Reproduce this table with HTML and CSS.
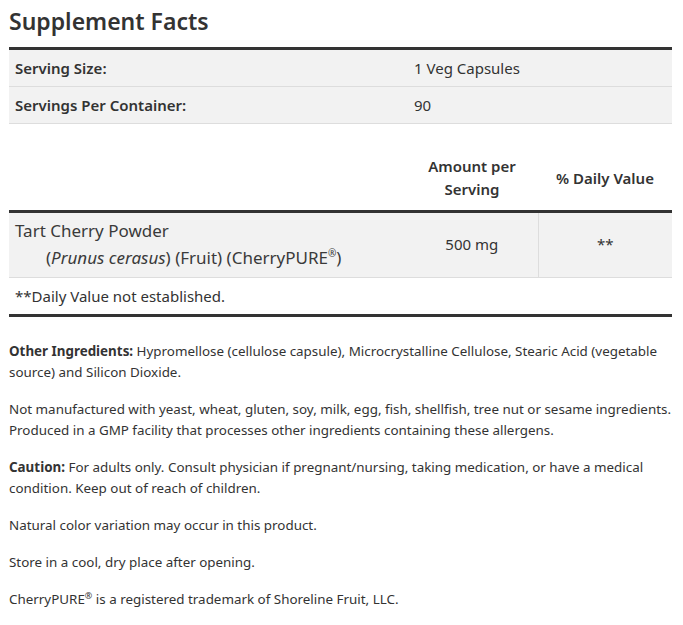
FILE: index.html
```html
<!DOCTYPE html>
<html>
<head>
<meta charset="utf-8">
<link rel="stylesheet" href="styles.css">
</head>
<body>
<div class="page">
  <h2 class="title">Supplement Facts</h2>
  <table class="facts serving">
    <tr><th class="c1">Serving Size:</th><td class="c2">1 Veg Capsules</td></tr>
    <tr><th class="c1">Servings Per Container:</th><td class="c2">90</td></tr>
  </table>
  <table class="facts nutr">
    <thead>
      <tr><th class="n1"></th><th class="n2">Amount per<br>Serving</th><th class="n3">% Daily Value</th></tr>
    </thead>
    <tbody>
      <tr class="shaded">
        <td class="n1">Tart Cherry Powder<div class="sub">(<i>Prunus cerasus</i>) (Fruit) (CherryPURE<sup>®</sup>)</div></td>
        <td class="n2 amt">500 mg</td>
        <td class="n3 dv">**</td>
      </tr>
      <tr class="foot"><td colspan="3">**Daily Value not established.</td></tr>
    </tbody>
  </table>
  <div class="notes">
    <p><b>Other Ingredients:</b> Hypromellose (cellulose capsule), Microcrystalline Cellulose, Stearic Acid (vegetable source) and Silicon Dioxide.</p>
    <p>Not manufactured with yeast, wheat, gluten, soy, milk, egg, fish, shellfish, tree nut or sesame ingredients. Produced in a GMP facility that processes other ingredients containing these allergens.</p>
    <p><b>Caution:</b> For adults only. Consult physician if pregnant/nursing, taking medication, or have a medical condition. Keep out of reach of children.</p>
    <p>Natural color variation may occur in this product.</p>
    <p>Store in a cool, dry place after opening.</p>
    <p>CherryPURE<sup>®</sup> is a registered trademark of Shoreline Fruit, LLC.</p>
  </div>
</div>
</body>
</html>
```
FILE: styles.css
```css
html, body { margin: 0; padding: 0; background: #fff; }
body { font-family: "Noto Sans", "Open Sans", sans-serif; color: #333; }
.page { padding: 0 11px 0 9px; }
.title { margin: 0; padding-top: 6px; font-size: 23px; font-weight: 600; line-height: 30px; height: 41px; color: #333; }
.facts { width: 100%; border-collapse: collapse; font-size: 15px; }
.serving { border-top: 3px solid #333; }
.serving th, .serving td { background: #f2f2f2; border-bottom: 1px solid #ddd; height: 36px; padding: 0 6px; text-align: left; }
.serving th { font-weight: 600; width: 387px; }
.nutr { margin-top: 23px; }
.nutr thead th { font-weight: 600; padding: 8px 4px 9px; height: 46px; border-bottom: 3px solid #333; line-height: 23px; }
.nutr .n1 { width: 385px; text-align: left; }
.nutr thead .n1 { width: 389px; }
.nutr .n2 { width: 124px; text-align: center; }
.nutr .n3 { text-align: center; }
.shaded td { background: #f2f2f2; border-bottom: 1px solid #ddd; }
.shaded .n1 { padding: 4px 6px 6px; line-height: 27px; font-size: 17px; color: #3a3a3a; }
.shaded .amt, .shaded .dv { padding-bottom: 4px; }
.shaded .n3 { border-left: 1px solid #ddd; }
.sub { padding-left: 31px; }
.amt, .dv { font-size: 15px; }
sup { font-size: 10px; line-height: 0; vertical-align: 7px; }
.foot td { padding: 0 6px; height: 36px; border-bottom: 3px solid #333; font-size: 15px; }
.notes { padding-top: 24px; font-size: 13.4px; line-height: 21px; }
.notes p { margin: 0 0 16px; }
.notes b { font-weight: 700; }
.notes sup { font-size: 9px; vertical-align: 5px; }
```
